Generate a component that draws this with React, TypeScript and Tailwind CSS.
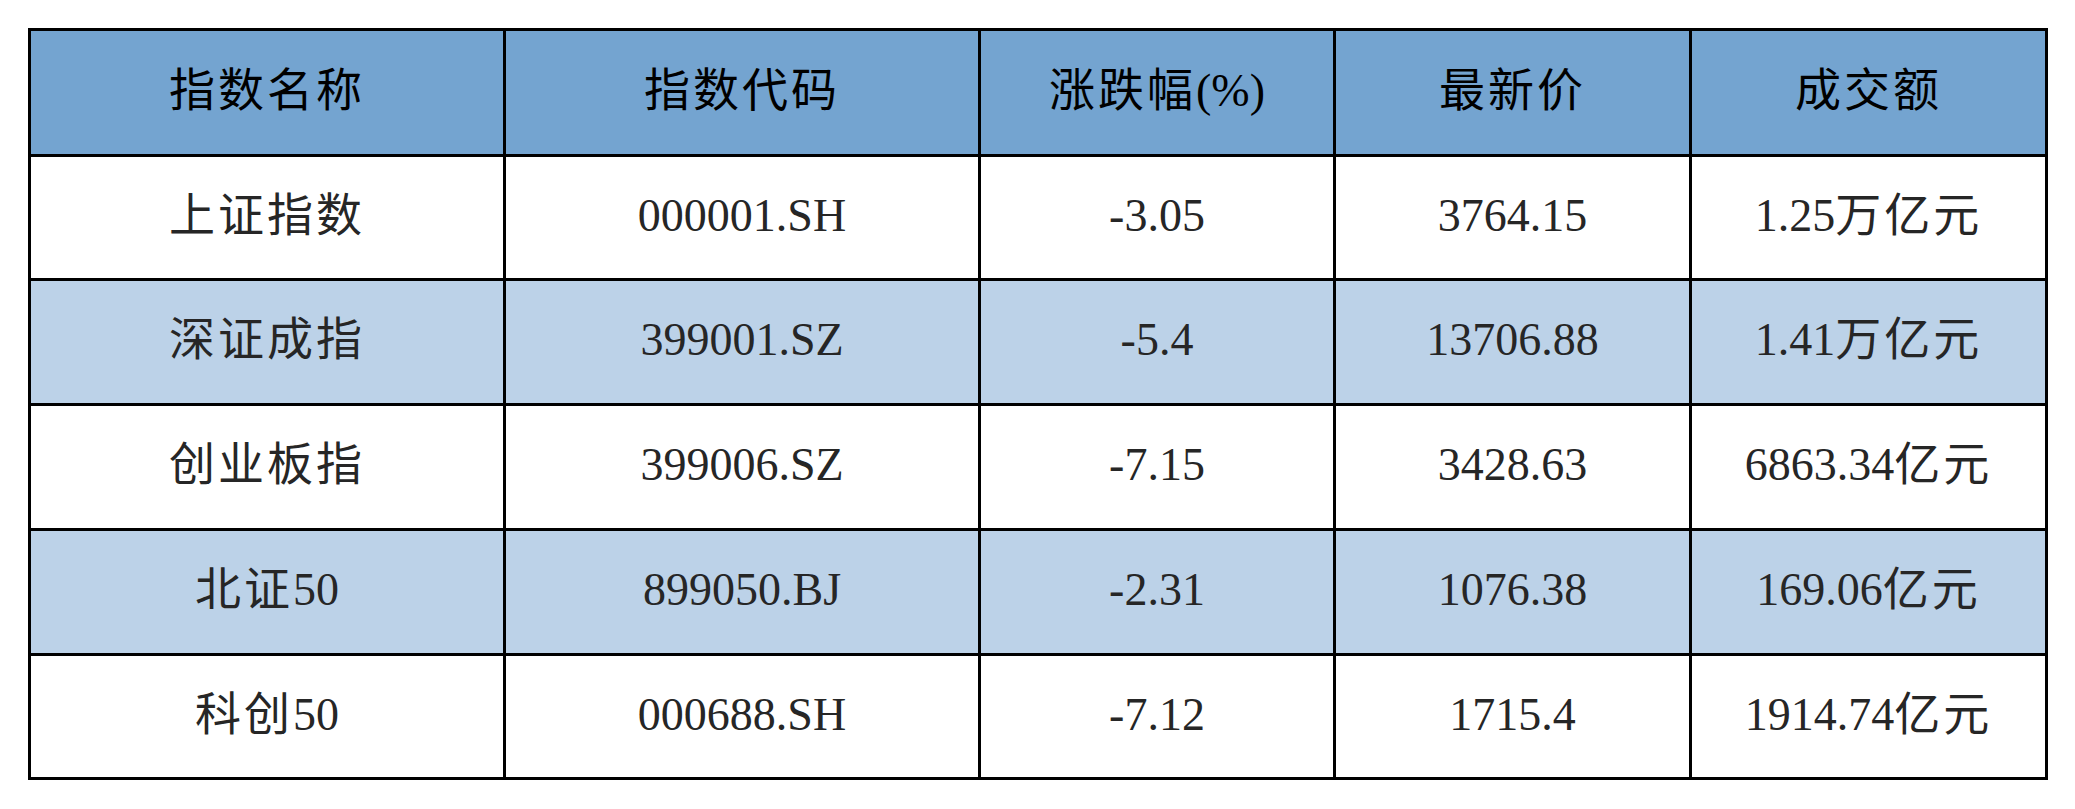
const headers = ["指数名称", "指数代码", "涨跌幅(%)", "最新价", "成交额"];

const rows = [
  ["上证指数", "000001.SH", "-3.05", "3764.15", "1.25万亿元"],
  ["深证成指", "399001.SZ", "-5.4", "13706.88", "1.41万亿元"],
  ["创业板指", "399006.SZ", "-7.15", "3428.63", "6863.34亿元"],
  ["北证50", "899050.BJ", "-2.31", "1076.38", "169.06亿元"],
  ["科创50", "000688.SH", "-7.12", "1715.4", "1914.74亿元"],
];

// Chinese runs get a little letter spacing, digits keep their natural width
const Text = ({ value }: { value: string }) => {
  const parts = value.match(/[\u4e00-\u9fff]+|[^\u4e00-\u9fff]+/g) ?? [];
  return (
    <>
      {parts.map((p, i) =>
        /[\u4e00-\u9fff]/.test(p) ? (
          <span key={i} className="tracking-[3px]">
            {p}
          </span>
        ) : (
          <span key={i}>{p}</span>
        )
      )}
    </>
  );
};

const App = () => {
  return (
    <div className="min-h-screen bg-white pl-[28px] pt-[28px]">
      <table
        className="border-collapse border-[3px] border-black text-[46px] text-[#262626]"
        style={{ fontFamily: '"Liberation Serif", "Noto Sans CJK SC", serif' }}
      >
        <colgroup>
          <col className="w-[475px]" />
          <col className="w-[475px]" />
          <col className="w-[355px]" />
          <col className="w-[356px]" />
          <col className="w-[356px]" />
        </colgroup>
        <thead>
          <tr className="h-[126px] bg-[#74a4d0]">
            {headers.map((h) => (
              <th
                key={h}
                className="border-[3px] border-black p-0 pb-[4px] text-center align-middle font-normal leading-none text-black"
              >
                <Text value={h} />
              </th>
            ))}
          </tr>
        </thead>
        <tbody>
          {rows.map((row, i) => (
            <tr
              key={row[0]}
              className={
                (i === 0 || i === 4 ? "h-[124px] " : "h-[125px] ") +
                (i % 2 === 1 ? "bg-[#bcd2e8]" : "bg-white")
              }
            >
              {row.map((cell, j) => (
                <td
                  key={j}
                  className="border-[3px] border-black p-0 pb-[4px] text-center align-middle leading-none"
                >
                  <Text value={cell} />
                </td>
              ))}
            </tr>
          ))}
        </tbody>
      </table>
    </div>
  );
};

export default App;
